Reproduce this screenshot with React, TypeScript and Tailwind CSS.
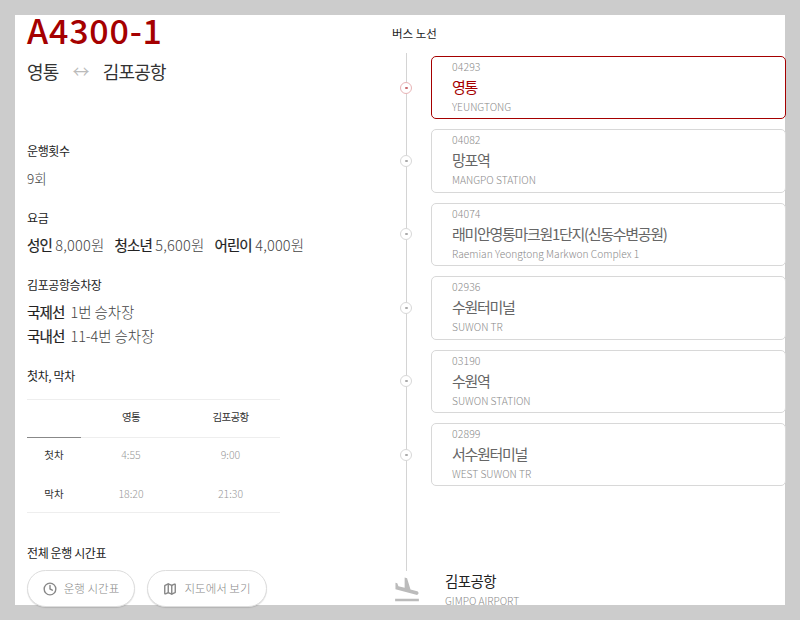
import { Clock, Map as MapIcon } from 'lucide-react'
import { MdFlightLand } from 'react-icons/md'

const stops = [
  { code: '04293', name: '영통', en: 'YEUNGTONG', active: true },
  { code: '04082', name: '망포역', en: 'MANGPO STATION' },
  { code: '04074', name: '래미안영통마크원1단지(신동수변공원)', en: 'Raemian Yeongtong Markwon Complex 1' },
  { code: '02936', name: '수원터미널', en: 'SUWON TR' },
  { code: '03190', name: '수원역', en: 'SUWON STATION' },
  { code: '02899', name: '서수원터미널', en: 'WEST SUWON TR' },
]

function SectionLabel({ children }: { children: React.ReactNode }) {
  return <h3 className="text-[12px] leading-[18px] font-normal tracking-[-0.4px] text-[#222]">{children}</h3>
}

function Strong({ children, className = '' }: { children: React.ReactNode; className?: string }) {
  return <b className={`font-normal tracking-[-0.9px] text-[#222] [-webkit-text-stroke:0.2px_#222] ${className}`}>{children}</b>
}

function StopRow({ stop }: { stop: (typeof stops)[number] }) {
  return (
    <div className="flex items-center h-[63.4px] mb-[10px]">
      <div className="w-[39px] pl-[8px] shrink-0">
        <div
          className={`relative w-[12px] h-[12px] rounded-full border-[1.5px] bg-white flex items-center justify-center ${
            stop.active ? 'border-[#e8b4b6]' : 'border-[#d8d8d8]'
          }`}
        >
          <span className={`w-[3px] h-[2px] rounded-full ${stop.active ? 'bg-[#c8686c]' : 'bg-[#aaa]'}`} />
        </div>
      </div>
      <div
        className={`flex-1 h-full rounded-[5px] border pl-[20px] bg-white ${
          stop.active ? 'border-[#a50000]' : 'border-[#d8d8d8]'
        }`}
      >
        <p className="text-[10.5px] leading-[14px] mt-[3px] tracking-[0.1px] text-[#8a8a8a] font-light">{stop.code}</p>
        <p
          className={`text-[15px] leading-[22px] mt-[2px] tracking-[-1.3px] ${
            stop.active ? 'text-[#a50000]' : 'text-[#666]'
          }`}
        >
          {stop.name}
        </p>
        <p className="text-[10.2px] leading-[14px] mt-[2px] text-[#8a8a8a] font-light">{stop.en}</p>
      </div>
    </div>
  )
}

export default function App() {
  return (
    <div
      className="h-[620px] bg-[#cccccc] p-[15px] overflow-hidden"
      style={{ fontFamily: '"Noto Sans CJK KR", "Noto Sans", sans-serif' }}
    >
      <div className="h-[590px] bg-white flex">
        {/* Left column */}
        <div className="w-[377px] pl-[12px] shrink-0">
          <h1 className="text-[34px] leading-[30px] font-medium text-[#a50000] tracking-[0.8px]">A4300-1</h1>
          <div className="flex items-center mt-[12px] text-[18px] leading-[28px] tracking-[-0.8px] text-[#333]">
            <span>영통</span>
            <span className="mx-[14px] text-[#bbb] text-[17px]">↔</span>
            <span>김포공항</span>
          </div>

          <div className="mt-[57px]">
            <SectionLabel>운행횟수</SectionLabel>
            <p className="mt-[8px] text-[13.5px] leading-[20px] font-light text-[#444]">9회</p>
          </div>

          <div className="mt-[21px]">
            <SectionLabel>요금</SectionLabel>
            <p className="mt-[8px] text-[14.5px] leading-[20px] font-light tracking-[0.2px] text-[#444]">
              <Strong>성인</Strong> 8,000원
              <Strong className="ml-[10px]">청소년</Strong> 5,600원
              <Strong className="ml-[10px]">어린이</Strong> 4,000원
            </p>
          </div>

          <div className="mt-[21px]">
            <SectionLabel>김포공항승차장</SectionLabel>
            <p className="mt-[6px] text-[14.5px] leading-[24px] font-light tracking-[-0.1px] text-[#444]">
              <Strong>국제선</Strong>&nbsp; 1번 승차장
            </p>
            <p className="text-[14.5px] leading-[24px] font-light tracking-[-0.1px] text-[#444]">
              <Strong>국내선</Strong>&nbsp; 11-4번 승차장
            </p>
          </div>

          <div className="mt-[19px]">
            <SectionLabel>첫차, 막차</SectionLabel>
          </div>

          <div className="mt-[14px] w-[253px] border-y border-[#eee] text-[10.5px] text-center">
            <div className="relative grid grid-cols-[54px_100px_99px] h-[38px] pb-[4px] items-center border-b border-[#eee] tracking-[-0.7px] text-[#333]">
              <span />
              <span>영통</span>
              <span>김포공항</span>
              <span className="absolute left-0 bottom-[-1px] w-[54px] h-px bg-[#888]" />
            </div>
            <div className="grid grid-cols-[54px_100px_99px] h-[38px] pb-[4px] items-center">
              <span className="text-[#333]">첫차</span>
              <span className="text-[#999] font-light">4:55</span>
              <span className="text-[#999] font-light">9:00</span>
            </div>
            <div className="grid grid-cols-[54px_100px_99px] h-[36px] pb-[1px] items-center">
              <span className="text-[#333]">막차</span>
              <span className="text-[#999] font-light">18:20</span>
              <span className="text-[#999] font-light">21:30</span>
            </div>
          </div>

          <div className="mt-[31px]">
            <SectionLabel>전체 운행 시간표</SectionLabel>
          </div>

          <div className="flex gap-[12px] mt-[8px]">
            <button className="w-[108px] h-[37px] rounded-full border border-[#ddd] shadow-[0_1px_1px_rgba(0,0,0,0.12)] bg-white flex items-center justify-center gap-[7px] text-[11.5px] text-[#888] font-light">
              <Clock size={14} className="text-[#888]" strokeWidth={2.4} />
              운행 시간표
            </button>
            <button className="w-[120px] h-[37px] rounded-full border border-[#ddd] shadow-[0_1px_1px_rgba(0,0,0,0.12)] bg-white flex items-center justify-center gap-[7px] text-[11.5px] text-[#888] font-light">
              <MapIcon size={14} className="text-[#888]" strokeWidth={2.4} />
              지도에서 보기
            </button>
          </div>
        </div>

        {/* Route column */}
        <div className="flex-1 min-w-0">
          <h3 className="text-[11.5px] leading-[18px] mt-[9px] text-[#222]">버스 노선</h3>
          <div className="relative mt-[14px] mr-[-1px]">
            <div className="absolute left-[14px] top-[-3px] h-[518px] w-px bg-[#d4d4d4]" />
            <div className="relative">
              {stops.map(stop => (
                <StopRow key={stop.code} stop={stop} />
              ))}
            </div>
            <div className="absolute left-0 top-[515px] flex items-start">
              <MdFlightLand size={30} className="text-[#bbb] mt-[4px]" />
              <div className="ml-[23px]">
                <p className="text-[14.5px] leading-[20px] tracking-[-0.6px] text-[#222]">김포공항</p>
                <p className="text-[10.2px] leading-[14px] mt-[3px] text-[#8a8a8a] font-light">GIMPO AIRPORT</p>
              </div>
            </div>
          </div>
        </div>
      </div>
    </div>
  )
}
